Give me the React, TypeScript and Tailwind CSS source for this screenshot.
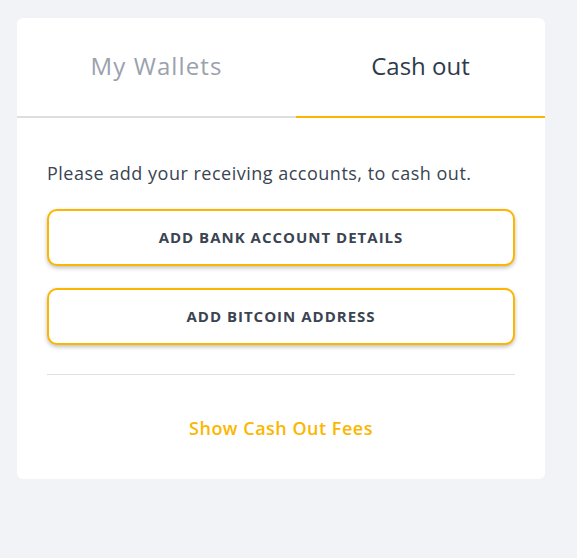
export default function App() {
  return (
    <div className="min-h-[558px] bg-[#f2f3f7] pt-[18px] pl-[17px] font-['Open_Sans','Lato',sans-serif]">
      <div className="w-[528px] bg-white rounded-md pb-[18px]">
        {/* Tabs */}
        <div className="flex">
          <button className="w-[279px] h-[100px] border-b-2 border-[#dedede] text-[24px] tracking-[1.1px] text-[#9aa1ad] pb-[2px]">
            My Wallets
          </button>
          <button className="w-[249px] h-[100px] border-b-2 border-[#fbb700] text-[24px] text-[#2f3a4a] pb-[2px]">
            Cash out
          </button>
        </div>

        {/* Body */}
        <div className="px-[30px] pt-[43px]">
          <p className="text-[18px] tracking-[0.5px] text-[#3a4452] leading-6">
            Please add your receiving accounts, to cash out.
          </p>
          <div className="flex flex-col gap-[22px] mt-[24px]">
            <button className="h-[57px] w-[468px] rounded-[10px] border-2 border-[#fbb700] bg-white shadow-[0_2px_4px_rgba(0,0,0,0.25)] text-[15px] font-bold tracking-[1px] text-[#3a4452]">
              ADD BANK ACCOUNT DETAILS
            </button>
            <button className="h-[57px] w-[468px] rounded-[10px] border-2 border-[#fbb700] bg-white shadow-[0_2px_4px_rgba(0,0,0,0.25)] text-[15px] font-bold tracking-[1px] text-[#3a4452]">
              ADD BITCOIN ADDRESS
            </button>
          </div>
          <div className="mt-[29px] border-t border-[#e0e0e0] w-[468px]" />
          <div className="h-[86px] flex items-center justify-center w-[468px] pt-[20px]">
            <button className="text-[18px] font-semibold tracking-[0.5px] text-[#fbb700]">
              Show Cash Out Fees
            </button>
          </div>
        </div>
      </div>
    </div>
  );
}
